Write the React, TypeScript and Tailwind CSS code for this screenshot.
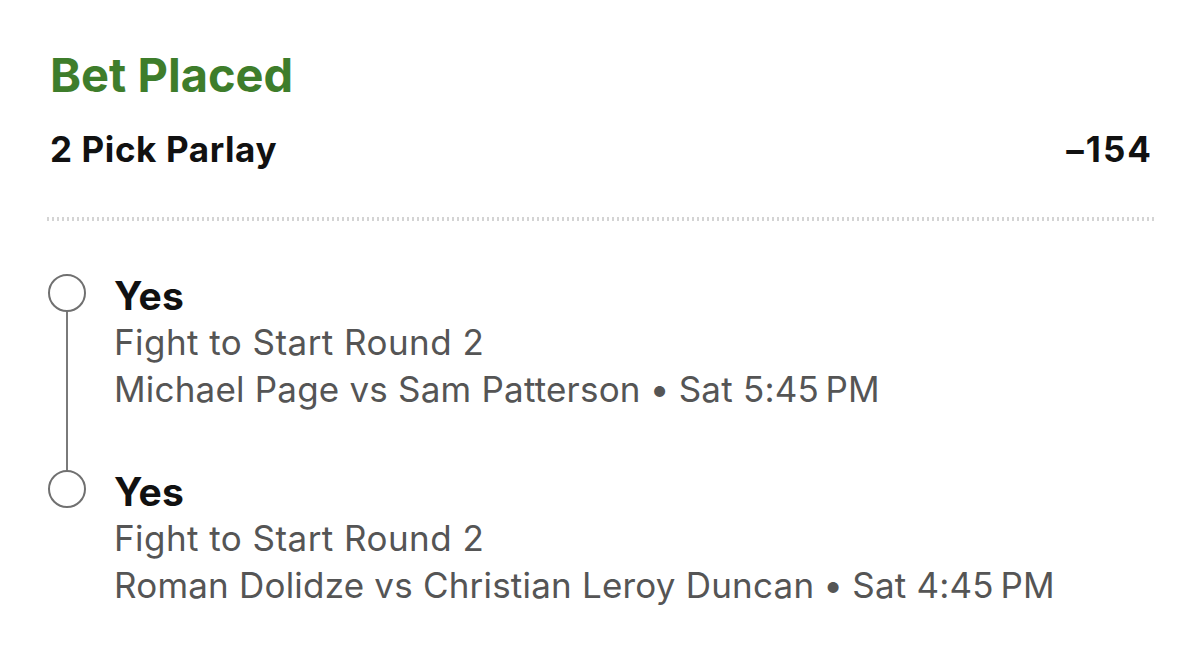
import React from "react";

type Leg = {
  pick: string;
  market: string;
  matchup: string;
  time: string;
};

const legs: Leg[] = [
  {
    pick: "Yes",
    market: "Fight to Start Round 2",
    matchup: "Michael Page vs Sam Patterson",
    time: "Sat 5:45\u2009PM",
  },
  {
    pick: "Yes",
    market: "Fight to Start Round 2",
    matchup: "Roman Dolidze vs Christian Leroy Duncan",
    time: "Sat 4:45\u2009PM",
  },
];

function LegRow({ leg, last }: { leg: Leg; last: boolean }) {
  return (
    <div className="flex">
      {/* timeline marker column */}
      <div className="-ml-[2px] flex w-[38px] flex-col items-center">
        <div className="h-[38px] w-[38px] shrink-0 rounded-full border-[2.5px] border-[#707070]" />
        {!last && <div className="w-[2.5px] flex-1 bg-[#7a7a7a]" />}
      </div>
      <div className={`ml-[28px] flex flex-col pt-[2px] ${last ? "" : "pb-[57px]"}`}>
        <span className="text-[39px] font-bold leading-[40px] tracking-[0.3px] text-[#111111]">
          {leg.pick}
        </span>
        <span className="mt-[3px] text-[35px] leading-[47px] tracking-[0.45px] text-[#555555]">
          {leg.market}
        </span>
        <span className="text-[35px] leading-[47px] tracking-[0.2px] text-[#555555]">
          {leg.matchup}
          <span className="mx-[-1px]"> • </span>
          {leg.time}
        </span>
      </div>
    </div>
  );
}

export default function App() {
  return (
    <div
      className="h-[660px] w-[1200px] overflow-hidden bg-white px-[50px] pt-[47px]"
      style={{ fontFamily: "Inter, 'Liberation Sans', sans-serif" }}
    >
      <h1 className="text-[47px] font-bold leading-[56px] text-[#3e7d2b]">Bet Placed</h1>
      <div className="mt-[26px] flex items-baseline justify-between text-[35px] font-bold leading-[40px] tracking-[0.6px] text-[#111111]">
        <span>2 Pick Parlay</span>
        <span className="-mr-[3px] tracking-[2px]">–154</span>
      </div>
      {/* dotted divider */}
      <div className="-ml-[3px] -mr-[4px] mt-[48px] h-[4px] bg-[repeating-linear-gradient(90deg,#d4d4d4_0px,#d4d4d4_2px,transparent_2px,transparent_5px)]" />
      <div className="mt-[53px] flex flex-col">
        {legs.map((leg, i) => (
          <LegRow key={i} leg={leg} last={i === legs.length - 1} />
        ))}
      </div>
    </div>
  );
}
